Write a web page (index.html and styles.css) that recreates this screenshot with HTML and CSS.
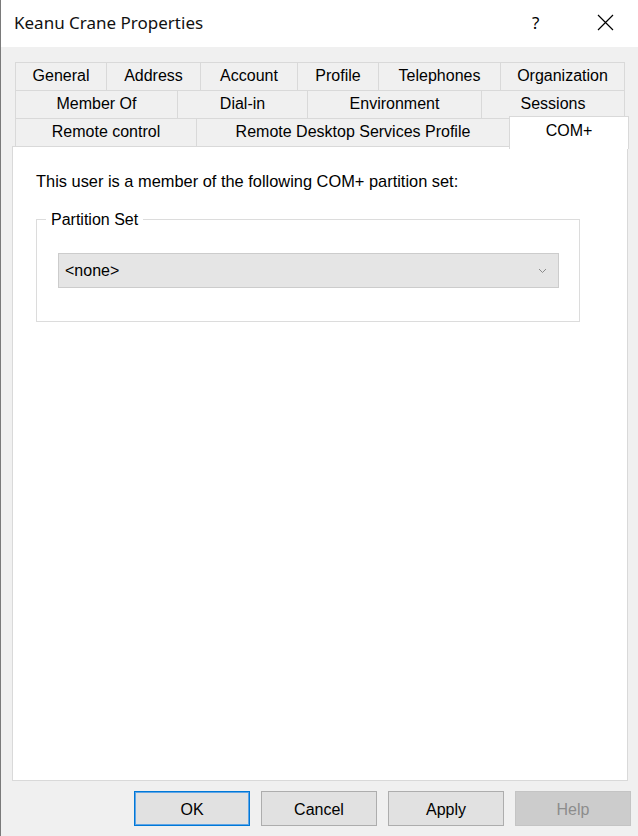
FILE: index.html
```html
<!DOCTYPE html>
<html>
<head>
<meta charset="utf-8">
<title>Keanu Crane Properties</title>
<link rel="stylesheet" href="styles.css">
</head>
<body>
<div class="window">
  <div class="titlebar">
    <span class="title">Keanu Crane Properties</span>
    <span class="tb-help">?</span>
    <span class="tb-close">
      <svg width="17" height="17" viewBox="0 0 17 17"><path d="M1 1 L16 16 M16 1 L1 16" stroke="#000" stroke-width="1.2" fill="none"/></svg>
    </span>
  </div>
  <div class="client">
    <div class="tabs">
      <div class="tabrow">
        <div class="tab w92">General</div>
        <div class="tab w94">Address</div>
        <div class="tab w97">Account</div>
        <div class="tab w81">Profile</div>
        <div class="tab w122">Telephones</div>
        <div class="tab w124">Organization</div>
      </div>
      <div class="tabrow">
        <div class="tab w163">Member Of</div>
        <div class="tab w130">Dial-in</div>
        <div class="tab w174">Environment</div>
        <div class="tab w143">Sessions</div>
      </div>
      <div class="tabrow">
        <div class="tab w182">Remote control</div>
        <div class="tab w313">Remote Desktop Services Profile</div>
        <div class="tab selected">COM+</div>
      </div>
    </div>
    <div class="panel">
      <p class="intro">This user is a member of the following COM+ partition set:</p>
      <div class="group">
        <span class="legend">Partition Set</span>
        <div class="combo">
          <span>&lt;none&gt;</span>
          <svg class="chev" width="9" height="6" viewBox="0 0 9 6"><path d="M1 1 L4.5 4.5 L8 1" stroke="#8a8a8a" stroke-width="1" fill="none"/></svg>
        </div>
      </div>
    </div>
    <div class="buttons">
      <button class="btn default">OK</button>
      <button class="btn">Cancel</button>
      <button class="btn">Apply</button>
      <button class="btn disabled">Help</button>
    </div>
  </div>
</div>
</body>
</html>
```
FILE: styles.css
```css
html, body {
  margin: 0;
  padding: 0;
  background: #f0f0f0;
}
.window {
  width: 638px;
  height: 836px;
  box-sizing: border-box;
  border-left: 1px solid #7a7a7a;
  background: #f0f0f0;
  font-family: "Liberation Sans", Arial, sans-serif;
  font-size: 16px;
  color: #000;
  overflow: hidden;
}
.titlebar {
  height: 47px;
  background: #fff;
  display: flex;
  align-items: center;
  padding-left: 13px;
}
.title {
  font-family: "Noto Sans", "Open Sans", sans-serif;
  font-size: 17px;
  color: #111;
  flex: 1;
  padding-bottom: 2px;
}
.tb-help {
  font-family: "Noto Sans", sans-serif;
  font-size: 17px;
  width: 65px;
  padding-bottom: 3px;
}
.tb-close {
  width: 41px;
  display: flex;
  padding-bottom: 2px;
}
.client {
  padding: 15px 0 0 11px;
}
.tabs {
  display: flex;
  flex-direction: column;
  padding-left: 3px;
}
.tabrow {
  display: flex;
  height: 29px;
}
.tabrow + .tabrow {
  margin-top: -1px;
}
.tab {
  box-sizing: border-box;
  height: 29px;
  border: 1px solid #d9d9d9;
  margin-left: -1px;
  background: #f0f0f0;
  display: flex;
  align-items: center;
  justify-content: center;
  padding-bottom: 1px;
  white-space: nowrap;
}
.tab:first-child { margin-left: 0; }
.w92 { width: 92px; }
.w94 { width: 95px; }
.w97 { width: 98px; }
.w81 { width: 82px; }
.w122 { width: 123px; }
.w124 { width: 125px; }
.w163 { width: 163px; }
.w130 { width: 131px; }
.w174 { width: 175px; }
.w143 { width: 144px; }
.w182 { width: 182px; }
.w313 { width: 314px; }
.tab.selected {
  width: 120px;
  height: 33px;
  margin-top: -2px;
  background: #fff;
  border-bottom: none;
  position: relative;
  z-index: 2;
  align-items: flex-start;
  padding-top: 5px;
}
.panel {
  box-sizing: border-box;
  width: 616px;
  height: 635px;
  margin-top: -1px;
  background: #fff;
  border: 1px solid #d9d9d9;
  padding: 24px 0 0 23px;
  position: relative;
  z-index: 1;
}
.intro {
  margin: 0;
  font-size: 16.4px;
  line-height: 20px;
}
.group {
  box-sizing: border-box;
  width: 544px;
  height: 103px;
  margin-top: 28px;
  border: 1px solid #dcdcdc;
  position: relative;
  padding: 33px 0 0 21px;
}
.legend {
  position: absolute;
  top: -10px;
  left: 9px;
  background: #fff;
  padding: 0 5px;
  line-height: 20px;
}
.combo {
  box-sizing: border-box;
  width: 501px;
  height: 35px;
  background: #e5e5e5;
  border: 1px solid #cccccc;
  display: flex;
  align-items: center;
  justify-content: space-between;
  padding: 0 11px 0 6px;
}
.buttons {
  display: flex;
  gap: 11px;
  padding: 10px 0 0 122px;
}
.btn {
  box-sizing: border-box;
  width: 116px;
  height: 35px;
  background: #e1e1e1;
  border: 1px solid #adadad;
  font-family: "Liberation Sans", Arial, sans-serif;
  font-size: 16px;
  color: #000;
  padding: 2px 0 0;
}
.btn.default {
  border: 1px solid #0078d7;
  box-shadow: inset 0 0 0 1px #5fa5e6;
}
.btn.disabled {
  background: #cccccc;
  border-color: #c4c4c4;
  color: #8c8c8c;
}
```
